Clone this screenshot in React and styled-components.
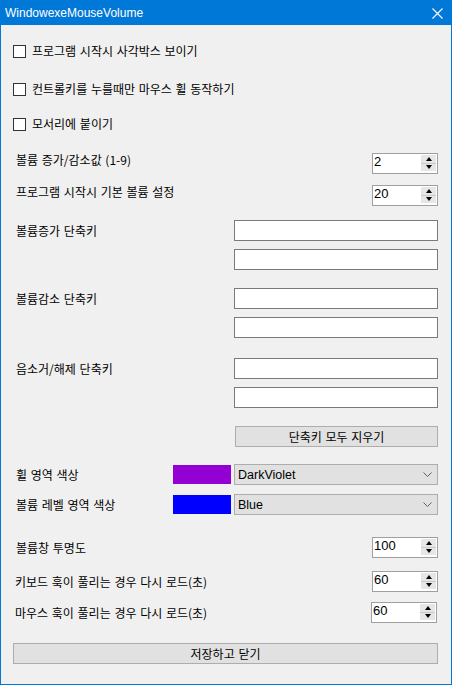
import React from 'react';
import styled, { createGlobalStyle } from 'styled-components';

const GlobalStyle = createGlobalStyle`
  html, body {
    margin: 0;
    padding: 0;
    background: #f0f0f0;
  }
  * {
    box-sizing: border-box;
  }
`;

const Window = styled.div`
  width: 452px;
  height: 685px;
  border: 1px solid #0078d7;
  border-top: none;
  background: #f0f0f0;
  display: flex;
  flex-direction: column;
  font-family: "Noto Sans CJK KR", "Noto Sans", sans-serif;
  font-size: 12px;
  color: #000;
`;

const TitleBar = styled.div`
  height: 25px;
  margin: 0 -1px;
  background: #0078d7;
  display: flex;
  align-items: center;
  justify-content: space-between;
  padding: 0 9px 0 5px;
`;

const Title = styled.span`
  font-family: "Liberation Sans", Arial, sans-serif;
  font-size: 12px;
  color: #fff;
`;

const CloseIcon = styled.svg`
  width: 11px;
  height: 11px;
  margin-top: 1px;
`;

const Body = styled.div`
  display: flex;
  flex-direction: column;
  padding: 0 13px 0 12px;
`;

const CheckRow = styled.label`
  height: 20px;
  margin-top: ${p => p.$mt}px;
  display: flex;
  align-items: center;
  gap: 6px;
`;

const CheckBox = styled.span`
  width: 13px;
  height: 13px;
  border: 1px solid #333;
  background: #fff;
  flex-shrink: 0;
`;

const Label = styled.span`
  line-height: ${p => p.$lh || 14}px;
  margin-left: ${p => (p.$ml === undefined ? 3 : p.$ml)}px;
  word-spacing: 1px;
  white-space: nowrap;
`;

const FieldRow = styled.div`
  display: flex;
  justify-content: space-between;
  align-items: ${p => p.$align || 'center'};
  margin-top: ${p => p.$mt}px;
`;

const SpinBox = styled.div`
  width: 66px;
  height: 21px;
  border: 1px solid #a0a0a0;
  background: #fff;
  display: flex;
  margin-right: ${p => p.$mr || 0}px;
`;

const SpinValue = styled.span`
  flex: 1;
  font-family: "Liberation Sans Narrow", "Liberation Sans", Arial, sans-serif;
  font-size: 13px;
  line-height: 15px;
  padding-left: 1px;
`;

const SpinButtons = styled.div`
  width: 15px;
  margin: 1px 1px 2px 0;
  display: flex;
  flex-direction: column;
  gap: 1px;
  background: #c8c8c8;
`;

const SpinButton = styled.div`
  flex: 1;
  background: #e6e6e6;
  display: flex;
  align-items: center;
  justify-content: center;
`;

const Arrow = styled.span`
  width: 0;
  height: 0;
  border-left: 3.5px solid transparent;
  border-right: 3.5px solid transparent;
  ${p => (p.$down ? 'border-top: 4px solid #000;' : 'border-bottom: 4px solid #000;')}
`;

const ShortcutGroup = styled.div`
  display: flex;
  justify-content: space-between;
  margin-top: ${p => p.$mt}px;
`;

const InputStack = styled.div`
  display: flex;
  flex-direction: column;
  gap: 8px;
`;

const TextInput = styled.div`
  width: 204px;
  height: 21px;
  border: 1px solid #7a7a7a;
  background: #fff;
`;

const ActionButton = styled.div`
  width: ${p => (p.$full ? 'auto' : '203px')};
  align-self: ${p => (p.$full ? 'stretch' : 'flex-end')};
  height: 21px;
  margin-top: ${p => p.$mt}px;
  border: 1px solid #adadad;
  background: #e1e1e1;
  display: flex;
  align-items: center;
  justify-content: center;
  line-height: 14px;
  word-spacing: 1px;
`;

const ColorControls = styled.div`
  display: flex;
  align-items: center;
  gap: 3px;
`;

const Swatch = styled.div`
  width: 58px;
  height: 19px;
  background: ${p => p.$color};
`;

const Combo = styled.div`
  width: 204px;
  height: 21px;
  border: 1px solid #adadad;
  background: #e1e1e1;
  display: flex;
  align-items: center;
  justify-content: space-between;
  padding: 0 5px 0 3px;
  font-family: "Liberation Sans", Arial, sans-serif;
  font-size: 12.5px;
`;

const SpinField = ({ value, mr }) => (
  <SpinBox $mr={mr}>
    <SpinValue>{value}</SpinValue>
    <SpinButtons>
      <SpinButton><Arrow /></SpinButton>
      <SpinButton><Arrow $down /></SpinButton>
    </SpinButtons>
  </SpinBox>
);

const Chevron = () => (
  <svg width="9" height="5" viewBox="0 0 9 5">
    <polyline points="0.5,0.5 4.5,4.5 8.5,0.5" fill="none" stroke="#606060" strokeWidth="1" />
  </svg>
);

const Shortcut = ({ label, mt }) => (
  <ShortcutGroup $mt={mt}>
    <Label $lh={21}>{label}</Label>
    <InputStack>
      <TextInput />
      <TextInput />
    </InputStack>
  </ShortcutGroup>
);

const ColorField = ({ label, color, name, mt }) => (
  <FieldRow $mt={mt}>
    <Label>{label}</Label>
    <ColorControls>
      <Swatch $color={color} />
      <Combo>
        <span>{name}</span>
        <Chevron />
      </Combo>
    </ColorControls>
  </FieldRow>
);

export default function App() {
  return (
    <>
      <GlobalStyle />
      <Window>
        <TitleBar>
          <Title>WindowexeMouseVolume</Title>
          <CloseIcon viewBox="0 0 11 11">
            <path d="M0.5 0.5 L10.5 10.5 M10.5 0.5 L0.5 10.5" stroke="#fff" strokeWidth="1.1" />
          </CloseIcon>
        </TitleBar>
        <Body>
          <CheckRow $mt={16}>
            <CheckBox />
            <Label $ml={0}>프로그램 시작시 사각박스 보이기</Label>
          </CheckRow>
          <CheckRow $mt={18}>
            <CheckBox />
            <Label $ml={0}>컨트롤키를 누를때만 마우스 휠 동작하기</Label>
          </CheckRow>
          <CheckRow $mt={15}>
            <CheckBox />
            <Label $ml={0}>모서리에 붙이기</Label>
          </CheckRow>

          <FieldRow $mt={19} $align="flex-start">
            <Label>볼륨 증가/감소값 (1-9)</Label>
            <SpinField value="2" />
          </FieldRow>
          <FieldRow $mt={11} $align="flex-start">
            <Label>프로그램 시작시 기본 볼륨 설정</Label>
            <SpinField value="20" />
          </FieldRow>

          <Shortcut label="볼륨증가 단축키" mt={14} />
          <Shortcut label="볼륨감소 단축키" mt={18} />
          <Shortcut label="음소거/해제 단축키" mt={20} />

          <ActionButton $mt={18}>단축키 모두 지우기</ActionButton>

          <ColorField label="휠 영역 색상" color="#9400d3" name="DarkViolet" mt={17} />
          <ColorField label="볼륨 레벨 영역 색상" color="#0000ff" name="Blue" mt={9} />

          <FieldRow $mt={22}>
            <Label>볼륨창 투명도</Label>
            <SpinField value="100" />
          </FieldRow>
          <FieldRow $mt={13}>
            <Label $ml={2}>키보드 훅이 풀리는 경우 다시 로드(초)</Label>
            <SpinField value="60" />
          </FieldRow>
          <FieldRow $mt={10}>
            <Label $ml={2}>마우스 훅이 풀리는 경우 다시 로드(초)</Label>
            <SpinField value="60" mr={1} />
          </FieldRow>

          <ActionButton $full $mt={20}>저장하고 닫기</ActionButton>
        </Body>
      </Window>
    </>
  );
}
